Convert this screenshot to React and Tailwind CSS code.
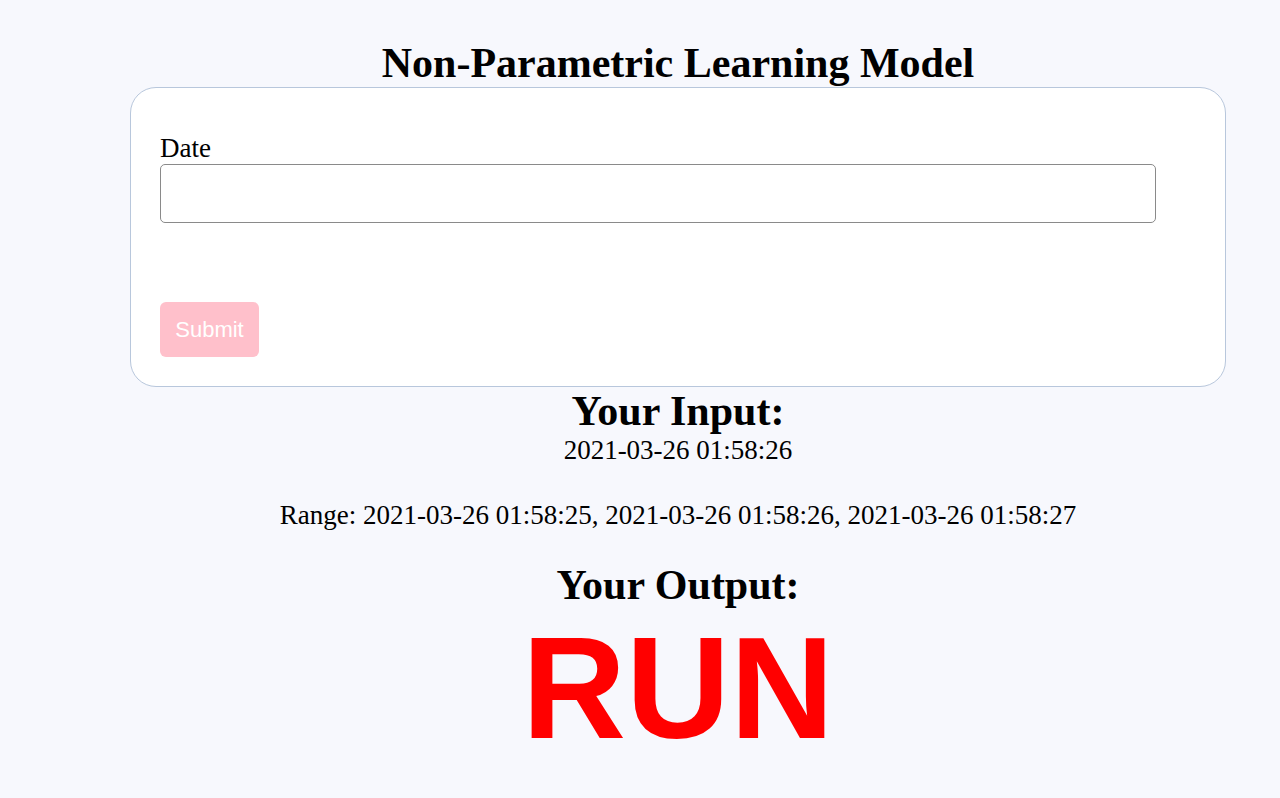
import React from 'react';

const serif = { fontFamily: '"Liberation Serif", "Times New Roman", serif' };
const sans = { fontFamily: '"Liberation Sans", Arial, sans-serif' };

const App = () => {
  return (
    <div className="min-h-screen bg-[#f7f8fd] text-black" style={serif}>
      <div className="w-[1096px] ml-[130px] flex flex-col items-center">
        {/* Title */}
        <h1 className="text-[42px] font-bold leading-[46px] mt-[40px]">Non-Parametric Learning Model</h1>

        {/* Form card */}
        <div className="w-full h-[300px] bg-white border border-[#b8c7dc] rounded-[26px] mt-[1px] px-[30px] pt-[46px]">
          <label className="block text-[27px] leading-[28px] -ml-[1px]">Date</label>
          <input
            type="text"
            className="block w-[996px] h-[59px] mt-[2px] -ml-[1px] border border-[#8a8a8a] rounded-[5px] bg-white"
          />
          <button
            className="mt-[79px] -ml-[1px] w-[99px] h-[55px] bg-[#ffc0cb] text-white text-[22px] rounded-[6px]"
            style={sans}
          >
            Submit
          </button>
        </div>

        {/* Results */}
        <h2 className="text-[42px] font-bold leading-[40px] mt-[4px]">Your Input:</h2>
        <p className="text-[27px] leading-[31px] mt-[4px]">2021-03-26 01:58:26</p>
        <p className="text-[27px] leading-[31px] mt-[34px]">
          Range: 2021-03-26 01:58:25, 2021-03-26 01:58:26, 2021-03-26 01:58:27
        </p>
        <h2 className="text-[42px] font-bold leading-[40px] mt-[34px]">Your Output:</h2>
        <p className="text-[144px] font-bold leading-[160px] text-[#ff0000] mt-[4px]" style={sans}>
          RUN
        </p>
      </div>
    </div>
  );
};

export default App;
